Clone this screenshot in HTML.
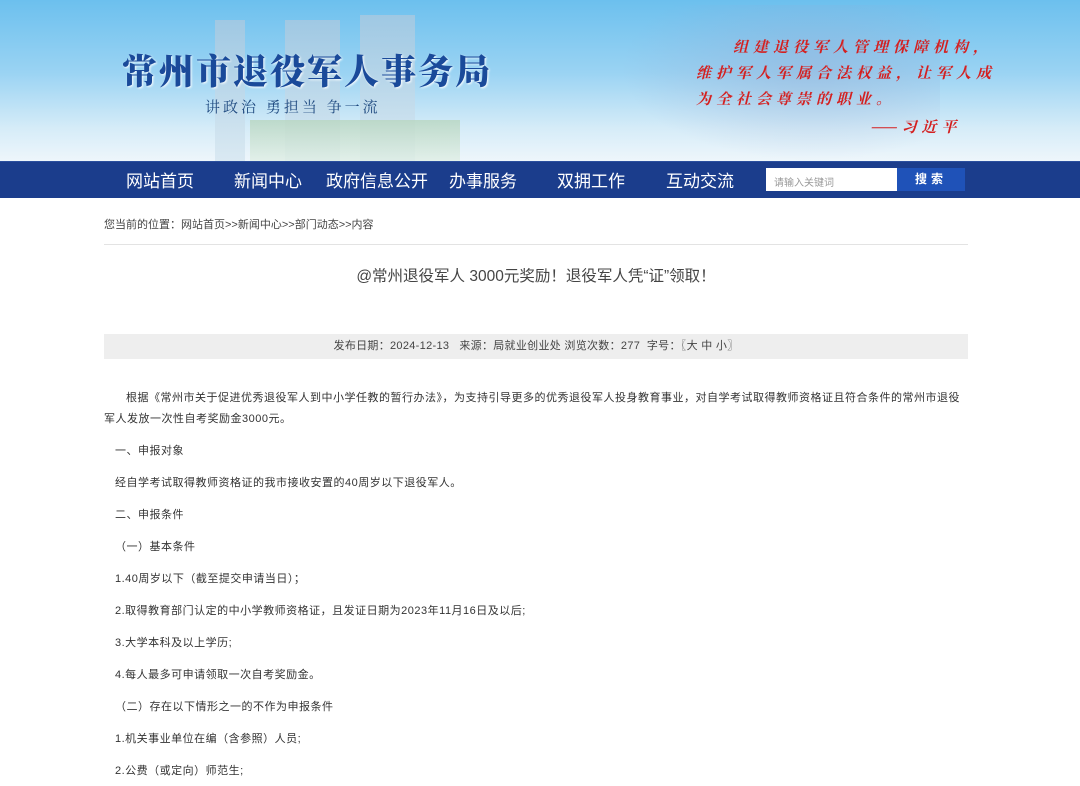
<!DOCTYPE html>
<html><head><meta charset="utf-8"><style>
*{margin:0;padding:0;box-sizing:border-box}
body{width:1080px;height:786px;overflow:hidden;background:#fff;font-family:"Liberation Sans","Noto Sans CJK SC",sans-serif;color:#333}
.hd{position:relative;height:161px;background:linear-gradient(180deg,#6cc0ee 0%,#9ad3f3 45%,#d6ecf8 80%,#eef6fb 100%);overflow:hidden}
.bld{position:absolute;background:linear-gradient(180deg,#a9c9e0,#d5e6f0);opacity:.8}
.title{position:absolute;left:122px;top:45px;font-family:"Noto Serif CJK SC",serif;font-weight:900;font-size:35px;color:#1a4a9a;letter-spacing:2px;text-shadow:1px 1px 2px #fff}
.sub{position:absolute;left:205px;top:96px;font-family:"Noto Serif CJK SC",serif;font-size:15px;color:#1f4a80;letter-spacing:3px}
.quote{position:absolute;font-family:"Noto Serif CJK SC",serif;font-weight:700;font-size:15px;color:#d42020;letter-spacing:5px;font-style:italic}
.nav{height:37px;background:#1b3d8c;position:relative;border-top:1px solid #2b4f9e}
.nav a{position:absolute;top:5px;color:#fff;font-size:17px;text-decoration:none}
.inp{position:absolute;left:766px;top:6px;width:131px;height:23px;background:#fff;font-size:10px;color:#999;padding:6px 8px}
.btn{position:absolute;left:897px;top:6px;width:68px;height:23px;background:#1f52b8;color:#fff;font-size:12px;font-weight:bold;text-align:center;line-height:23px;letter-spacing:4px}
.wrap{width:864px;margin-left:104px}
.crumb{font-size:11px;color:#444;padding-top:18px;height:47px;border-bottom:1px solid #e3e3e3}
h1{font-weight:normal;font-size:15.5px;color:#444;text-align:center;margin-top:19px;height:70px}
.meta{background:#eeeeee;height:25px;font-size:11px;text-align:center;line-height:25px;color:#444;letter-spacing:.3px}
.c{margin-top:29px}
.c p{font-size:11px;letter-spacing:.5px;color:#333;line-height:21px}
.c p+p{margin-top:11px}
</style></head><body>
<div class="hd">
<div class="bld" style="left:215px;top:20px;width:30px;height:141px"></div>
<div class="bld" style="left:285px;top:20px;width:55px;height:141px"></div>
<div class="bld" style="left:360px;top:15px;width:55px;height:146px"></div>
<div class="bld" style="left:250px;top:120px;width:210px;height:41px;background:linear-gradient(180deg,#b8d6c0,#dfeee5)"></div>
<div style="position:absolute;left:620px;top:5px;width:320px;height:156px;background:radial-gradient(ellipse at 60% 40%,rgba(150,170,210,.45),rgba(255,255,255,0) 70%)"></div>
<div class="title">常州市退役军人事务局</div>
<div class="sub">讲政治 勇担当 争一流</div>
<div class="quote" style="left:733px;top:36px">组建退役军人管理保障机构，</div>
<div class="quote" style="left:696px;top:62px">维护军人军属合法权益，让军人成</div>
<div class="quote" style="left:696px;top:88px">为全社会尊崇的职业。</div>
<div class="quote" style="left:870px;top:116px">——习近平</div>
</div>
<div class="nav">
<a style="left:126px">网站首页</a><a style="left:234px">新闻中心</a><a style="left:326px">政府信息公开</a><a style="left:449px">办事服务</a><a style="left:557px">双拥工作</a><a style="left:666px">互动交流</a>
<div class="inp">请输入关键词</div><div class="btn">搜索</div>
</div>
<div class="wrap">
<div class="crumb">您当前的位置：网站首页&gt;&gt;新闻中心&gt;&gt;部门动态&gt;&gt;内容</div>
<h1>@常州退役军人 3000元奖励！退役军人凭“证”领取！</h1>
<div class="meta">发布日期：2024-12-13&nbsp;&nbsp;&nbsp;来源：局就业创业处 浏览次数：277&nbsp;&nbsp;字号：〖大 中 小〗</div>
<div class="c">
<p style="text-indent:22px">根据《常州市关于促进优秀退役军人到中小学任教的暂行办法》，为支持引导更多的优秀退役军人投身教育事业，对自学考试取得教师资格证且符合条件的常州市退役军人发放一次性自考奖励金3000元。</p>
<p style="text-indent:11px">一、申报对象</p>
<p style="text-indent:11px">经自学考试取得教师资格证的我市接收安置的40周岁以下退役军人。</p>
<p style="text-indent:11px">二、申报条件</p>
<p style="text-indent:11px">（一）基本条件</p>
<p style="text-indent:11px">1.40周岁以下（截至提交申请当日）；</p>
<p style="text-indent:11px">2.取得教育部门认定的中小学教师资格证，且发证日期为2023年11月16日及以后;</p>
<p style="text-indent:11px">3.大学本科及以上学历;</p>
<p style="text-indent:11px">4.每人最多可申请领取一次自考奖励金。</p>
<p style="text-indent:11px">（二）存在以下情形之一的不作为申报条件</p>
<p style="text-indent:11px">1.机关事业单位在编（含参照）人员;</p>
<p style="text-indent:11px">2.公费（或定向）师范生;</p>
</div></div>
</body></html>
